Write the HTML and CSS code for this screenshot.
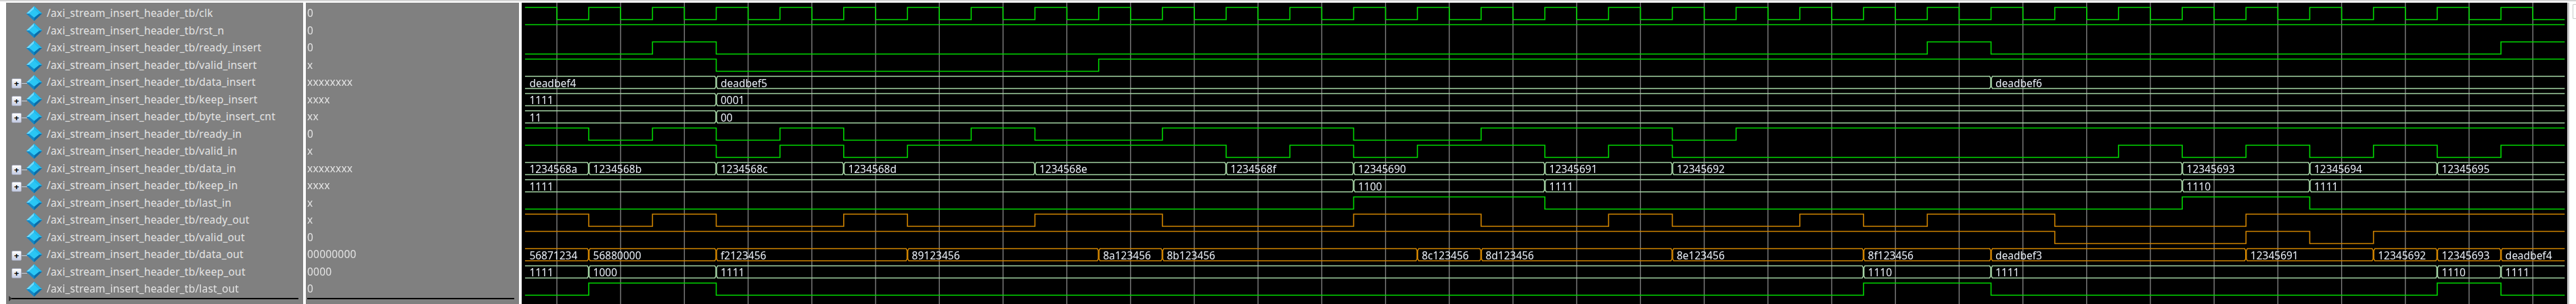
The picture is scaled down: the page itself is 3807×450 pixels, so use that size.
FILE: index.html
```html
<!DOCTYPE html>
<html lang="en">
<head>
  <meta charset="UTF-8">
  <title>Wave - axi_stream_insert_header_tb</title>
  <link rel="stylesheet" href="styles.css">
</head>
<body>
  <svg class="defs" width="0" height="0">
    <symbol id="diamond" viewBox="0 0 23 22">
      <polygon points="11.5,0 23,11 11.5,22 0,11" fill="#1590cc"/>
      <polygon points="11.5,0 11.5,4 4,11 0,11" fill="#6fdcff"/>
      <polygon points="11.5,0 23,11 19,11 11.5,4" fill="#22bcee"/>
      <polygon points="0,11 4,11 11.5,17 11.5,22" fill="#1486c4"/>
      <polygon points="23,11 19,11 11.5,17 11.5,22" fill="#0b6ca8"/>
      <polygon points="11.5,4 19,11 11.5,17 4,11" fill="#2ac6f4"/>
    </symbol>
  </svg>

  <div class="wave-window">
    <!-- signal names -->
    <div class="pane names">
      <div class="row"><svg class="icon"><use href="#diamond"/></svg><span class="label">/axi_stream_insert_header_tb/clk</span></div>
      <div class="row"><svg class="icon"><use href="#diamond"/></svg><span class="label">/axi_stream_insert_header_tb/rst_n</span></div>
      <div class="row"><svg class="icon"><use href="#diamond"/></svg><span class="label">/axi_stream_insert_header_tb/ready_insert</span></div>
      <div class="row"><svg class="icon"><use href="#diamond"/></svg><span class="label">/axi_stream_insert_header_tb/valid_insert</span></div>
      <div class="row"><span class="expand">+</span><svg class="icon"><use href="#diamond"/></svg><span class="label">/axi_stream_insert_header_tb/data_insert</span></div>
      <div class="row"><span class="expand">+</span><svg class="icon"><use href="#diamond"/></svg><span class="label">/axi_stream_insert_header_tb/keep_insert</span></div>
      <div class="row"><span class="expand">+</span><svg class="icon"><use href="#diamond"/></svg><span class="label">/axi_stream_insert_header_tb/byte_insert_cnt</span></div>
      <div class="row"><svg class="icon"><use href="#diamond"/></svg><span class="label">/axi_stream_insert_header_tb/ready_in</span></div>
      <div class="row"><svg class="icon"><use href="#diamond"/></svg><span class="label">/axi_stream_insert_header_tb/valid_in</span></div>
      <div class="row"><span class="expand">+</span><svg class="icon"><use href="#diamond"/></svg><span class="label">/axi_stream_insert_header_tb/data_in</span></div>
      <div class="row"><span class="expand">+</span><svg class="icon"><use href="#diamond"/></svg><span class="label">/axi_stream_insert_header_tb/keep_in</span></div>
      <div class="row"><svg class="icon"><use href="#diamond"/></svg><span class="label">/axi_stream_insert_header_tb/last_in</span></div>
      <div class="row"><svg class="icon"><use href="#diamond"/></svg><span class="label">/axi_stream_insert_header_tb/ready_out</span></div>
      <div class="row"><svg class="icon"><use href="#diamond"/></svg><span class="label">/axi_stream_insert_header_tb/valid_out</span></div>
      <div class="row"><span class="expand">+</span><svg class="icon"><use href="#diamond"/></svg><span class="label">/axi_stream_insert_header_tb/data_out</span></div>
      <div class="row"><span class="expand">+</span><svg class="icon"><use href="#diamond"/></svg><span class="label">/axi_stream_insert_header_tb/keep_out</span></div>
      <div class="row"><svg class="icon"><use href="#diamond"/></svg><span class="label">/axi_stream_insert_header_tb/last_out</span></div>
      <div class="split-line with-arrow"></div>
    </div>

    <!-- values at cursor -->
    <div class="pane values">
      <div class="value">0</div>
      <div class="value">0</div>
      <div class="value">0</div>
      <div class="value">x</div>
      <div class="value">xxxxxxxx</div>
      <div class="value">xxxx</div>
      <div class="value">xx</div>
      <div class="value">0</div>
      <div class="value">x</div>
      <div class="value">xxxxxxxx</div>
      <div class="value">xxxx</div>
      <div class="value">x</div>
      <div class="value">x</div>
      <div class="value">0</div>
      <div class="value">00000000</div>
      <div class="value">0000</div>
      <div class="value">0</div>
      <div class="split-line"></div>
    </div>

    <!-- waveforms, drawn by waves.js -->
    <svg class="waves" id="waves" width="3023" height="446"></svg>

    <div class="side-strip">
      <div class="side-button"></div>
    </div>
  </div>

  <script src="waves.js"></script>
</body>
</html>
```

FILE: styles.css
```css
body {
  margin: 0;
  background-color: white;
  font-family: "Noto Sans", sans-serif;
  font-size: 15.5px;
  overflow: hidden;
}
.defs {
  position: absolute;
}
.wave-window {
  display: flex;
  height: 446px;
  padding-top: 2px;
  padding-left: 9px;
  border-top: 2px solid #d4d4d4;
  filter: blur(0.4px);
}
.pane {
  background-color: #808080;
  color: #e4e4e4;
  padding-top: 3px;
  box-sizing: border-box;
  letter-spacing: 0.2px;
}
.names {
  width: 439px;
  margin-right: 4px;
}
.values {
  width: 315px;
  margin-right: 4px;
}
.row {
  display: grid;
  grid-template-columns: 22px 30px 1fr;
  align-items: center;
  height: 25.5px;
  padding-left: 8px;
}
.value {
  display: flex;
  align-items: center;
  box-sizing: border-box;
  height: 25.5px;
  padding: 0 0 1.5px 2px;
}
.label {
  grid-column: 3;
  padding-bottom: 1.5px;
  white-space: nowrap;
}
.icon {
  grid-column: 2;
  width: 23px;
  height: 22px;
}
.expand {
  position: relative;
  top: 2px;
  width: 13px;
  height: 13px;
  border: 1px solid #a4a8b8;
  border-radius: 2px;
  background: linear-gradient(#ffffff, #c4cce4);
  color: black;
  font-size: 13px;
  font-weight: bold;
  line-height: 12px;
  text-align: center;
}
.expand::after {
  content: "";
  position: absolute;
  left: 14px;
  top: 6px;
  width: 8px;
  height: 1px;
  background-color: #c4d0e0;
}
.split-line {
  position: relative;
  height: 2px;
  margin: 0 7px 0 2px;
  background-color: black;
}
.with-arrow {
  margin-left: 4px;
}
.with-arrow::before {
  content: "";
  position: absolute;
  left: 0;
  top: -3px;
  border-left: 5px solid #303030;
  border-top: 4px solid transparent;
  border-bottom: 4px solid transparent;
}
.waves {
  display: block;
  flex: none;
  background-color: black;
  border-right: 3px solid #c8c8c8;
  box-sizing: content-box;
}
.side-strip {
  flex: 1;
  padding: 2px 0 0 5px;
}
.side-button {
  height: 20px;
  border: 1px solid #c8c8c8;
  border-right: none;
  border-radius: 2px 0 0 2px;
}

/* waveform layers */
.grid {
  stroke: #808080;
  stroke-width: 1.4;
}
.bit, .bus {
  fill: none;
  stroke-width: 1.6;
}
.bit {
  stroke: #00d800;
}
.bus {
  stroke: #a4d4a4;
}
.orange {
  stroke: #d08400;
}
.bus-text {
  fill: #eaf0f8;
  font-size: 15.5px;
}
```

FILE: waves.js
```js
// Wave geometry: one clock half period is one step, all edges fall on steps
const STEP = 47.1;
const START = 4.9;
const END_STEP = 64;
const ROW_H = 25.5;
const TOP = 7;
const SWING = 18;

const svg = document.getElementById("waves");
const NS = "http://www.w3.org/2000/svg";

function x(step) {
  return START + STEP * step;
}

function add(tag, attrs, text) {
  const el = document.createElementNS(NS, tag);
  for (const name in attrs) el.setAttribute(name, attrs[name]);
  if (text) el.textContent = text;
  svg.appendChild(el);
}

const clockEdges = [];
for (let i = 1; i < END_STEP; i++) clockEdges.push(i);

// [row, starts high, toggle steps, orange]
const bits = [
  [0, 1, clockEdges],
  [1, 1, []],
  [2, 0, [4, 6, 44, 46, 62]],
  [3, 1, [6, 18]],
  [7, 1, [2, 4, 6, 8, 10, 14, 16, 20, 26, 30, 36, 38]],
  [8, 1, [6, 8, 10, 12, 22, 24, 26, 28, 32, 34, 36, 50, 52, 54, 56, 58, 60, 62]],
  [11, 0, [26, 32, 52, 56]],
  [12, 1, [2, 4, 6, 10, 12, 16, 20, 26, 30, 34, 36, 40, 42, 44, 48, 54], true],
  [13, 1, [48, 54, 56, 58], true],
  [16, 0, [2, 6, 42, 46, 60, 62]]
];

// [row, [[start step, value], ...], orange]
const buses = [
  [4, [[0, "deadbef4"], [6, "deadbef5"], [46, "deadbef6"]]],
  [5, [[0, "1111"], [6, "0001"]]],
  [6, [[0, "11"], [6, "00"]]],
  [9, [[0, "1234568a"], [2, "1234568b"], [6, "1234568c"], [10, "1234568d"], [16, "1234568e"], [22, "1234568f"],
       [26, "12345690"], [32, "12345691"], [36, "12345692"], [52, "12345693"], [56, "12345694"], [60, "12345695"]]],
  [10, [[0, "1111"], [26, "1100"], [32, "1111"], [52, "1110"], [56, "1111"]]],
  [14, [[0, "56871234"], [2, "56880000"], [6, "f2123456"], [12, "89123456"], [18, "8a123456"], [20, "8b123456"],
        [28, "8c123456"], [30, "8d123456"], [36, "8e123456"], [42, "8f123456"], [46, "deadbef3"], [54, "12345691"],
        [58, "12345692"], [60, "12345693"], [62, "deadbef4"]], true],
  [15, [[0, "1111"], [2, "1000"], [6, "1111"], [42, "1110"], [46, "1111"], [60, "1110"], [62, "1111"]]]
];

// Time grid on every falling clock edge
for (let n = 0; n < 32; n++) {
  const gx = 52 + 94.2 * n;
  add("line", { class: "grid", x1: gx, x2: gx, y1: 0, y2: 446 });
}

bits.forEach(([row, high, edges, orange]) => {
  const hi = TOP + ROW_H * row;
  let y = high ? hi : hi + SWING;
  let d = `M${x(0)} ${y}`;
  edges.forEach((step) => {
    d += `L${x(step)} ${y}`;
    y = y === hi ? hi + SWING : hi;
    d += `L${x(step)} ${y}`;
  });
  d += `L${x(END_STEP)} ${y}`;
  add("path", { class: orange ? "bit orange" : "bit", d });
});

buses.forEach(([row, segments, orange]) => {
  const top = TOP + ROW_H * row;
  const bottom = top + SWING;
  segments.forEach(([step, value], i) => {
    const last = i === segments.length - 1;
    const a = x(step);
    const b = last ? x(END_STEP) : x(segments[i + 1][0]);
    // chamfered ends where the value changes, open at the window edges
    const left = i === 0 ? `M${a} ${top}` : `M${a + 0.5} ${top + 3}L${a + 2} ${top}`;
    const right = last ? `L${b} ${top}M${b} ${bottom}` : `L${b - 2} ${top}L${b - 0.5} ${top + 3}L${b - 0.5} ${bottom - 3}L${b - 2} ${bottom}`;
    const close = i === 0 ? `L${a} ${bottom}` : `L${a + 2} ${bottom}L${a + 0.5} ${bottom - 3}L${a + 0.5} ${top + 3}`;
    add("path", { class: orange ? "bus orange" : "bus", d: left + right + close });
    add("text", { class: "bus-text", x: a + 6.5, y: top + 15.5 }, value);
  });
});
```
